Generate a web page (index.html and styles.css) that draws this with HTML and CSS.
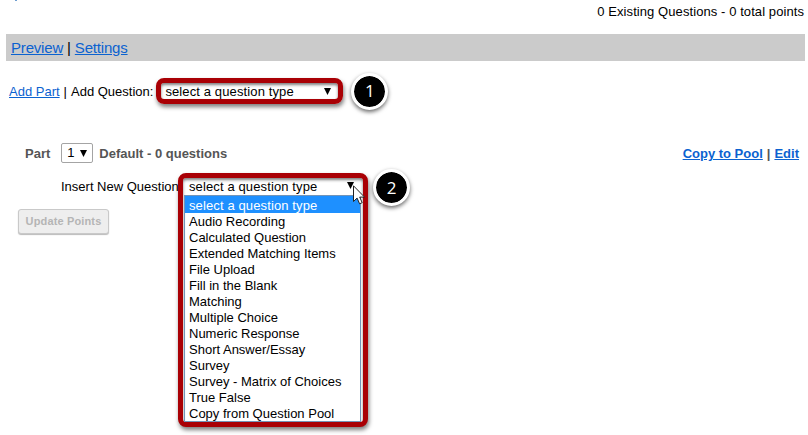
FILE: index.html
```
<!DOCTYPE html>
<html lang="en">
<head>
<meta charset="utf-8">
<title>Edit Assessment</title>
<link rel="stylesheet" href="styles.css">
</head>
<body>
<header class="summary"><span class="crumb-tail"></span><span class="t-summary">0 Existing Questions - 0 total points</span></header>
<nav class="toolbar"><a href="#" class="t-preview">Preview</a><span class="bar-sep">|</span><a href="#" class="t-settings">Settings</a></nav>
<section class="add-row">
  <a href="#" class="t-addpart">Add Part</a><span class="sep">|</span><span class="t-addq">Add Question:</span>
  <div class="callout"><span class="t-select">select a question type</span><svg class="arrow" viewBox="0 0 7 7"><path d="M0 0h7L3.5 7z"/></svg></div>
  <span class="badge">1</span>
</section>
<section class="part-row">
  <strong class="t-part">Part</strong>
  <div class="part-select"><span>1</span><svg class="arrow" viewBox="0 0 7 7"><path d="M0 0h7L3.5 7z"/></svg></div>
  <strong class="t-default">Default - 0 questions</strong>
  <div class="part-links"><a href="#" class="t-copy">Copy to Pool</a><span>|</span><a href="#">Edit</a></div>
</section>
<section class="insert-row">
  <span class="t-insert">Insert New Question</span>
  <div class="menu">
    <div class="menu-head"><span class="t-select">select a question type</span><svg class="arrow" viewBox="0 0 7 7"><path d="M0 0h7L3.5 7z"/></svg></div>
    <ul class="options">
      <li class="selected"><span class="t-select">select a question type</span></li>
      <li>Audio Recording</li>
      <li>Calculated Question</li>
      <li>Extended Matching Items</li>
      <li>File Upload</li>
      <li>Fill in the Blank</li>
      <li>Matching</li>
      <li>Multiple Choice</li>
      <li>Numeric Response</li>
      <li>Short Answer/Essay</li>
      <li>Survey</li>
      <li>Survey - Matrix of Choices</li>
      <li>True False</li>
      <li>Copy from Question Pool</li>
    </ul>
    <svg class="cursor" viewBox="0 0 12 20"><path d="M.5.8v15.7l3.6-3.4 2.5 5.7 2.6-1.1-2.5-5.6h4.8z"/></svg>
  </div>
  <span class="badge">2</span>
</section>
<button class="update" disabled>Update Points</button>
</body>
</html>
```
FILE: styles.css
```
* { box-sizing: border-box; }
body {
  margin: 0;
  width: 808px;
  height: 435px;
  overflow: hidden;
  background: #fff;
  color: #000;
  font: 13px/16px "Liberation Sans", Arial, sans-serif;
}
a { color: #0b62d0; text-decoration: underline; }
.summary {
  display: flex;
  justify-content: space-between;
  height: 34px;
  padding: 4px 4px 0 15px;
}
.t-summary { letter-spacing: .08px; }
.t-select { letter-spacing: .12px; }
.crumb-tail { width: 2px; height: 1px; margin-top: -4px; background: #6f9ed0; }
.toolbar {
  display: flex;
  align-items: center;
  gap: 4px;
  height: 27px;
  margin: 0 3px 0 6px;
  padding-left: 5px;
  background: #cbcbcb;
  font-size: 15px;
  letter-spacing: -.18px;
}
.add-row {
  display: flex;
  align-items: center;
  height: 40px;
  margin-top: 10px;
  padding-left: 9px;
}
.t-addpart, .sep, .t-addq { padding-top: 2px; }
.sep { margin: 0 4px; }
.callout {
  display: flex;
  align-items: center;
  justify-content: space-between;
  width: 187px;
  height: 26px;
  margin-left: 3px;
  padding: 1px 7px 0 4px;
  border: 5px solid #a90005;
  border-radius: 8px;
  box-shadow: 1px 3px 4px rgba(0,0,0,.5), inset 0 2px 3px rgba(0,0,0,.5);
}
.arrow { width: 7px; height: 7px; flex: none; }
.badge {
  display: flex;
  align-items: center;
  justify-content: center;
  flex: none;
  width: 37px;
  height: 37px;
  margin-left: 8px;
  border: 3px solid #fff;
  border-radius: 50%;
  background: #000;
  background-clip: padding-box;
  box-shadow: 0 2px 4px rgba(0,0,0,.6);
  color: #fff;
  font: 17px/20px "Open Sans", sans-serif;
}
.part-row {
  display: flex;
  align-items: center;
  height: 20px;
  margin-top: 32px;
  padding: 0 9px 0 25px;
  color: #555;
}
.t-part, .t-default, .part-links { padding-top: 2px; }
.part-select {
  display: flex;
  align-items: center;
  justify-content: space-between;
  width: 32px;
  height: 20px;
  margin: 0 6px 0 11px;
  padding: 0 5px 0 5px;
  border: 1px solid #a4a4a4;
  border-radius: 2px;
  color: #000;
}
.part-links {
  display: flex;
  gap: 4px;
  margin-left: auto;
  font-weight: bold;
}
.insert-row {
  display: flex;
  align-items: flex-start;
  height: 46px;
  margin-top: 5px;
  padding-left: 61px;
}
.t-insert { width: 117px; padding-top: 11px; white-space: nowrap; }
.menu {
  position: relative;
  z-index: 1;
  flex: none;
  width: 190px;
  height: 254px;
  margin-top: 5px;
  border: 5px solid #a90005;
  border-radius: 8px;
  background: #fff;
  box-shadow: 1px 3px 4px rgba(0,0,0,.5), inset 0 2px 3px rgba(0,0,0,.5);
}
.menu-head {
  display: flex;
  align-items: center;
  justify-content: space-between;
  height: 17px;
  padding: 1px 9px 0 6px;
}
.menu-head .arrow { margin-top: -3px; }
.options {
  width: 177px;
  margin: 0 0 0 1px;
  padding: 0;
  border: 1px solid #7294b8;
  list-style: none;
}
.options li { height: 16px; padding-left: 4px; line-height: 18px; white-space: nowrap; }
.options .selected { height: 17px; background: #1e90ff; color: #fff; line-height: 19px; }
.cursor {
  position: absolute;
  left: 170px;
  top: 7px;
  width: 12px;
  height: 20px;
  fill: #fff;
  stroke: #222;
}
.insert-row .badge { margin: 1px 0 0 5px; }
.update {
  display: block;
  width: 91px;
  height: 25px;
  margin: -5px 0 0 18px;
  padding: 0 0 2px;
  border: 1px solid #c9c9c9;
  border-radius: 3px;
  background: #eee;
  box-shadow: 0 1px 1px #bbb;
  color: #b5b5b5;
  font: bold 11px/14px "Liberation Sans", Arial, sans-serif;
  letter-spacing: .15px;
}
```
